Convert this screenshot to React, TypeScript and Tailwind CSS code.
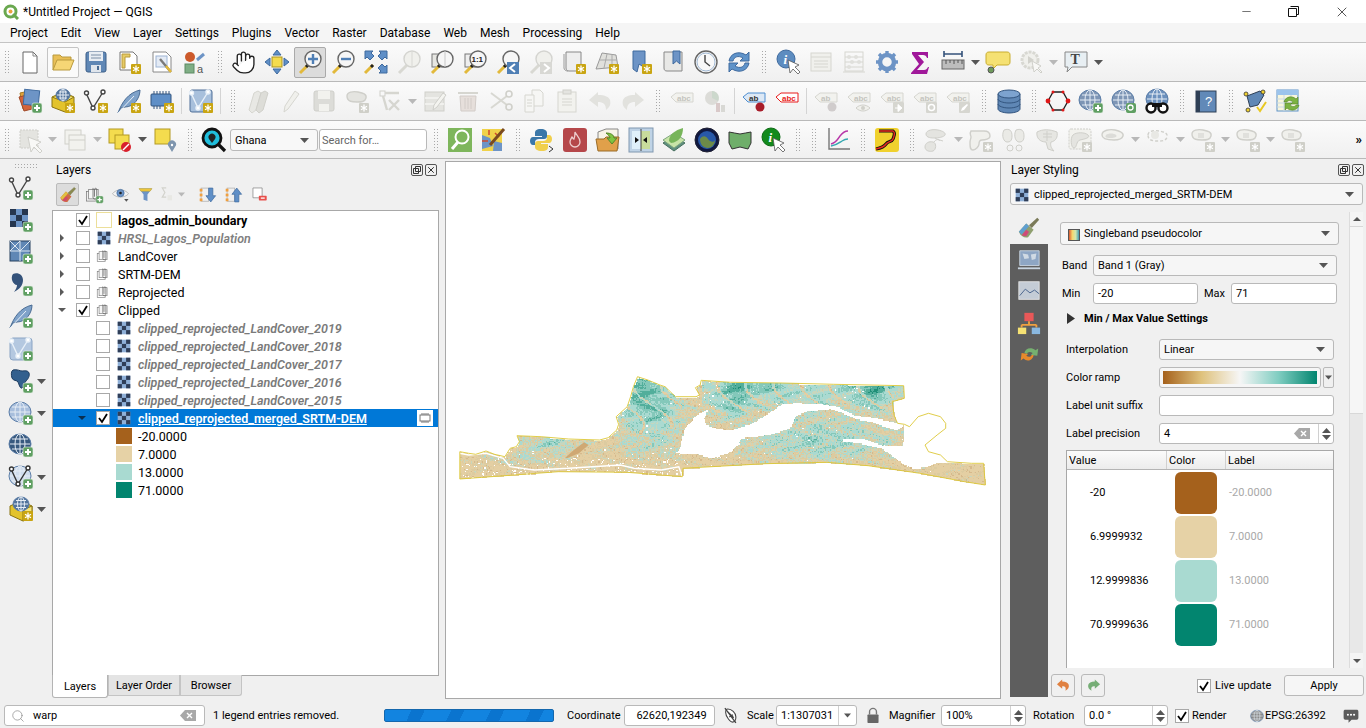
import type { ReactNode } from 'react'
import { Hand, Minus, X, Search } from 'lucide-react'

// shared icon bits, all in a 26x26 box
const Plus = () => (
  <g>
    <rect x="15" y="15" width="10" height="10" rx="2" fill="#5f9f62" stroke="#e8f0e8" strokeWidth=".6" />
    <path d="M20 17v6M17 20h6" stroke="#fff" strokeWidth="2" />
  </g>
)
const Star = ({ grey = false }: { grey?: boolean }) => (
  <g>
    <rect x="15" y="15" width="10" height="10" rx="1" fill={grey ? '#cfcfc8' : '#c9a512'} />
    <path d="M20 16.5v7M17 18.2l6 3.6M23 18.2l-6 3.6" stroke="#fff" strokeWidth="1.3" />
  </g>
)
const Mag = ({ grey = false, children }: { grey?: boolean; children?: ReactNode }) => (
  <g>
    <path d="M3 24l8-8" stroke={grey ? '#d8d8d2' : '#e2b93b'} strokeWidth="3" />
    {!grey && <path d="M9 18l2-2" stroke="#222" strokeWidth="3" />}
    <circle cx="16" cy="10" r="8" fill={grey ? '#f0f0ec' : '#f6f6f6'} stroke={grey ? '#d4d4d0' : '#666'} strokeWidth="1.4" />
    {children}
  </g>
)
const Globe = ({ c = '#6b90bd', cx = 12, cy = 12, r = 10 }: { c?: string; cx?: number; cy?: number; r?: number }) => (
  <g>
    <ellipse cx={cx} cy={cy} rx={r + 1} ry={r} fill={c} stroke="#5c7ea8" />
    <path
      d={`M${cx - r} ${cy}h${2 * r}M${cx - r + 2} ${cy - r / 2}h${2 * r - 4}M${cx - r + 2} ${cy + r / 2}h${2 * r - 4}M${cx} ${cy - r}v${2 * r}`}
      stroke="#e6edf5"
      strokeWidth="1"
    />
    <ellipse cx={cx} cy={cy} rx={r / 2} ry={r} fill="none" stroke="#e6edf5" />
  </g>
)
const Checker = ({ light = false }: { light?: boolean }) => (
  <g>
    <rect x="2" y="2" width="18" height="18" fill={light ? '#8fb0d8' : '#6d94c6'} />
    {[[2, 2], [14, 2], [8, 8], [2, 14], [14, 14]].map(([x, y]) => (
      <rect key={`${x}-${y}`} x={x} y={y} width="6" height="6" fill={light ? '#2f3e58' : '#26364f'} />
    ))}
  </g>
)
const Vee = ({ c = '#444' }: { c?: string }) => (
  <g fill="#fff" stroke={c} strokeWidth="1.4">
    <path d="M3 5l7 15L20 4" fill="none" />
    <circle cx="3.5" cy="5" r="2" />
    <circle cx="10" cy="20" r="2" />
    <circle cx="20" cy="4" r="2" />
  </g>
)
const Feather = () => (
  <g>
    <path d="M2 25C6 14 12 5 24 2c0 8-6 17-15 17l-4 1z" fill="#7fa2c9" stroke="#4a6c94" />
    <path d="M2 25L18 8" stroke="#e8f0f8" />
  </g>
)
const Ab = ({ fill = '#f2f2ee', line = '#d6d6d0', color = '#c4c4be', t = 'abc' }: { fill?: string; line?: string; color?: string; t?: string }) => (
  <g>
    <path d="M2 9l5-4h17v9H7z" fill={fill} stroke={line} />
    <text x="8" y="13" fontSize="8" fontWeight="700" fill={color} fontFamily="Liberation Sans">{t}</text>
  </g>
)
const GreyShape = () => <path d="M3 8c0-4 6-5 11-4s9 2 8 6-5 4-9 4-10 0-10-6z" fill="#e4e4e0" stroke="#cfcfca" strokeWidth="1.4" />

const ic: Record<string, ReactNode> = {
  new: <g><path d="M6 3h10l4 4v17H6z" fill="#fff" stroke="#666" /><path d="M16 3v4h4" fill="none" stroke="#888" /></g>,
  open: <g><path d="M3 21V6h7l2 2h9v4" fill="#e9bf56" stroke="#b99a3e" /><path d="M3 21l4-10h17l-4 10z" fill="#f6d675" stroke="#b99a3e" /></g>,
  save: <g><rect x="3" y="3" width="20" height="20" rx="2" fill="#5f87b5" stroke="#3d5f88" /><rect x="6" y="3" width="14" height="9" fill="#e8edf3" /><path d="M8 6h10M8 9h10" stroke="#7a8ea6" /><rect x="8" y="16" width="10" height="7" fill="#dfe5ec" /><rect x="14" y="17" width="2" height="4" fill="#4a6c94" /></g>,
  saveAs: <g><path d="M4 3h13l4 4v14H4z" fill="#fff" stroke="#777" /><path d="M6 5h8v3H9v11H6z" fill="#e6cb65" stroke="#b99a3e" /><Star /></g>,
  layout: <g><path d="M4 3h13l5 5v15H4z" fill="#fff" stroke="#888" /><rect x="7" y="7" width="11" height="11" fill="#e4ebf5" stroke="#9db4d4" /><path d="M11 10l10 12" stroke="#7a7a7a" strokeWidth="2.4" /><path d="M17 17l5 6" stroke="#e2b93b" strokeWidth="2.4" /></g>,
  style: <g><circle cx="8" cy="8" r="5" fill="#cc5a2c" /><path d="M15 11l7-6" stroke="#6d94c6" strokeWidth="3" /><rect x="3" y="15" width="9" height="9" fill="#7fae85" stroke="#5d8a63" /><text x="15" y="24" fontSize="11" fill="#555" fontFamily="Liberation Sans">a</text></g>,
  pan: <g><rect x="8" y="8" width="10" height="10" fill="#f4dc4e" stroke="#a99324" /><path d="M13 1l4 5h-8zM13 25l4-5H9zM1 13l5-4v8zM25 13l-5-4v8z" fill="#5f8fc7" stroke="#3f6a9e" /></g>,
  zoomIn: <Mag><path d="M11 10h10M16 5v10" stroke="#4f7fb5" strokeWidth="2.4" /></Mag>,
  zoomOut: <Mag><path d="M11 10h10" stroke="#4f7fb5" strokeWidth="2.4" /></Mag>,
  zoomFull: <g><path d="M2 2h8l-2 2 3 3-4 4-3-3-2 2zM24 2h-8l2 2-3 3 4 4 3-3 2 2zM24 24h-8l2-2-3-3 4-4 3 3 2-2z" fill="#5f8fc7" stroke="#3f6a9e" /><rect x="9" y="9" width="8" height="8" fill="#f4f4f0" /><path d="M2 24l8-8" stroke="#e2b93b" strokeWidth="3" /><path d="M8 18l2-2" stroke="#222" strokeWidth="3" /></g>,
  zoomSel: <Mag grey><path d="M16 2v16" stroke="#d8d8d4" /></Mag>,
  zoomLayer: <g><rect x="3" y="5" width="14" height="13" fill="#e6e6e2" stroke="#777" /><Mag><path d="M16 2v16" stroke="#c8c8c8" /></Mag></g>,
  zoom11: <g><rect x="3" y="5" width="14" height="13" fill="#eee" stroke="#777" /><Mag><text x="9.5" y="13" fontSize="8" fontWeight="700" fill="#222" fontFamily="Liberation Sans">1:1</text></Mag></g>,
  zoomLast: <g><Mag /><rect x="12" y="13" width="12" height="12" fill="#4f7fb5" /><path d="M20 15l-5 4 5 4" fill="none" stroke="#fff" strokeWidth="2" /></g>,
  zoomNext: <g><Mag grey /><rect x="12" y="13" width="12" height="12" fill="#d8d8d4" /><path d="M16 15l5 4-5 4" fill="none" stroke="#fff" strokeWidth="2" /></g>,
  mapNew: <g><path d="M5 3h15v19H8c-2 0-3-1-3-3z" fill="#eee" stroke="#888" /><path d="M3 5v14c0 2 2 3 4 3" fill="none" stroke="#999" /><Star /></g>,
  map3d: <g><path d="M8 4l14 2 2 12-22 2z" fill="#e0e0dc" stroke="#999" /><path d="M6 11l17 0M13 5l-3 14M18 5l0 14" stroke="#aaa" /><Star /></g>,
  bookNew: <g><path d="M6 2h12v17l-6-4-2 8-4-3z" fill="#6d94c6" stroke="#3f6a9e" /><Star /></g>,
  bookShow: <g><path d="M4 3h18v19H7c-2 0-3-1-3-3z" fill="#e8e8e6" stroke="#888" /><path d="M13 2h7v13l-3.500-3-3.500 3z" fill="#6d94c6" stroke="#3f6a9e" /></g>,
  clock: <g><circle cx="13" cy="13" r="11" fill="#f8f8f8" stroke="#666" strokeWidth="1.4" /><circle cx="13" cy="13" r="9" fill="none" stroke="#9fb8d4" /><path d="M12 6v7l5 4" fill="none" stroke="#444" strokeWidth="1.4" /></g>,
  refresh: <g><path d="M3 12C4 5 12 1 20 6l3-3v9h-9l3-3c-5-3-9-1-10 3z" fill="#5f93c9" stroke="#3f6a9e" /><path d="M23 14c-1 7-9 11-17 6l-3 3v-9h9l-3 3c5 3 9 1 10-3z" fill="#5f93c9" stroke="#3f6a9e" /></g>,
  identify: <g><circle cx="11" cy="10" r="9" fill="#5d8cc0" stroke="#3f6a9e" /><text x="8.500" y="15" fontSize="13" fontWeight="700" fontStyle="italic" fill="#fff" fontFamily="Liberation Serif">i</text><path d="M13 11l2 13 3-4 5 5 2-2-5-5 4-2z" fill="#fff" stroke="#555" strokeWidth=".8" /></g>,
  table: <g><rect x="3" y="4" width="20" height="18" fill="#f0f0ec" stroke="#d6d6d0" /><path d="M3 8h20M6 12h14M6 15h14M6 18h14" stroke="#d6d6d0" /></g>,
  abacus: <g><rect x="4" y="3" width="18" height="19" fill="none" stroke="#d6d6d0" /><path d="M2 23h22M4 8h18M4 13h18M4 18h18" stroke="#d6d6d0" /><g fill="#e0e0dc"><circle cx="8" cy="8" r="2" /><circle cx="15" cy="8" r="2" /><circle cx="11" cy="13" r="2" /><circle cx="18" cy="13" r="2" /><circle cx="8" cy="18" r="2" /></g></g>,
  gear: <g><circle cx="13" cy="13" r="7" fill="none" stroke="#6d94c6" strokeWidth="4.500" /><path d="M13 2v4M13 20v4M2 13h4M20 13h4M5 5l3 3M18 18l3 3M21 5l-3 3M8 18l-3 3" stroke="#6d94c6" strokeWidth="3.400" /></g>,
  sigma: <path d="M5 3h16v6h-1c-.5-2-2-3-4-3H11l6 7-7 8h7c2 0 3-1 4-3h1l-2 7H4v-1l8-9-7-10z" fill="#a0189a" />,
  ruler: <g><path d="M4 5h18M4 2v6M22 2v6" stroke="#34527a" strokeWidth="1.600" /><rect x="2" y="11" width="22" height="9" fill="#bdbdbd" stroke="#666" /><path d="M6 11v4M10 11v3M14 11v4M18 11v3M22 11v4" stroke="#555" /></g>,
  note: <g><path d="M4 3h18c2 0 3 1 3 3v7c0 2-1 3-3 3H12l-4 4v-4H4c-2 0-3-1-3-3V6c0-2 1-3 3-3z" fill="#f5e173" stroke="#c9ad2e" /><circle cx="6" cy="21" r="3" fill="#6e9a5b" stroke="#555" /></g>,
  actions: <g><circle cx="12" cy="11" r="8" fill="#f0f0ec" stroke="#d8d8d2" strokeWidth="3" strokeDasharray="3 1" /><path d="M10 7l6 4-6 4z" fill="#d2d2cc" /><path d="M14 12l2 11 3-3 4 4 1-1-4-4 3-2z" fill="#f8f8f6" stroke="#d0d0ca" /></g>,
  textBox: <g><path d="M2 3h22v15H9l-5 5 1-5H2z" fill="#e8eff3" stroke="#888" /><text x="7.500" y="15" fontSize="14" fontWeight="700" fill="#444" fontFamily="Liberation Serif">T</text></g>,

  layers: <g><path d="M3 5l9-2 3 16-9 2z" fill="#e0a33b" stroke="#a87a20" /><path d="M2 9l8-2 5 14-8 2z" fill="#d4643a" stroke="#a04a28" /><rect x="7" y="2" width="15" height="15" fill="#6d94c6" stroke="#3f6a9e" transform="rotate(6 14 9)" /><Plus /></g>,
  gpkg: <g><path d="M2 9l11-5 11 5v11l-9 4-13-5z" fill="#e3c32c" stroke="#8a7412" /><path d="M2 9l13 5 9-5" fill="#f6e67a" stroke="#8a7412" /><Globe c="#53749c" cx={13} cy={7} r={6} /><Star /></g>,
  vee: <g><Vee /><Star /></g>,
  feather: <g><Feather /><Star /></g>,
  chip: <g><rect x="2" y="6" width="20" height="12" rx="1" fill="#5f8fc7" stroke="#33557f" /><path d="M5 3v3M8 3v3M11 3v3M14 3v3M17 3v3M20 3v3M5 18v3M8 18v3M11 18v3" stroke="#33557f" /><Star /></g>,
  veeBox: <g><rect x="2" y="2" width="22" height="22" rx="2" fill="#a8c0dc" stroke="#4f6f98" /><Vee c="#e8f0f8" /><Star /></g>,

  dPencils: <g><path d="M4 22L9 5l4-2 3 2-5 17-4 3z" fill="#e8e8e4" stroke="#d6d6d0" /><path d="M11 22l5-17 4-2 3 2-5 17-4 3z" fill="#ddddd8" stroke="#d0d0ca" /></g>,
  dPencil: <path d="M6 24l1-6L17 3l4 3-11 15z" fill="#f0f0ec" stroke="#d6d6d0" />,
  dSave: <g><rect x="3" y="3" width="20" height="20" rx="2" fill="#dcdcd8" stroke="#cfcfca" /><rect x="7" y="3" width="12" height="8" fill="#f2f2ee" /><rect x="8" y="16" width="10" height="7" fill="#f2f2ee" /></g>,
  dShape: <g><GreyShape /><Star grey /></g>,
  dTools: <g><rect x="3" y="3" width="5" height="5" fill="none" stroke="#cfcfca" /><path d="M6 8l4 14M8 5h14M12 12l10 10M22 12L12 22" stroke="#d6d6d0" strokeWidth="2.400" /></g>,
  dEdit: <g><rect x="3" y="4" width="19" height="19" fill="#e4e4e0" stroke="#cfcfca" /><path d="M3 10h19M3 16h19" stroke="#f5f5f2" strokeWidth="1.500" /><path d="M11 22l1-5 9-12 3 2-9 12z" fill="#f4f4f0" stroke="#cfcfca" /></g>,
  dTrash: <g><path d="M3 5h20" stroke="#d6d6d0" strokeWidth="2" /><path d="M5 8h16l-1 15H6z" fill="#e6dfdb" stroke="#d2ccc8" /><path d="M10 10v11M13 10v11M16 10v11" stroke="#d2ccc8" /></g>,
  dCut: <g><path d="M3 5l16 12M3 20L19 8" stroke="#d8d8d2" strokeWidth="2" /><circle cx="21" cy="6" r="3" fill="none" stroke="#d0d0ca" strokeWidth="1.600" /><circle cx="21" cy="19" r="3" fill="none" stroke="#d0d0ca" strokeWidth="1.600" /></g>,
  dCopy: <g><path d="M11 2h8l3 3v13H11z" fill="#f6f6f4" stroke="#d6d6d0" /><path d="M4 7h9v17H4z" fill="#f6f6f4" stroke="#d6d6d0" /><path d="M6 12h5M6 15h5M6 18h5" stroke="#d6d6d0" /></g>,
  dPaste: <g><rect x="4" y="4" width="18" height="20" fill="#f2f2ee" stroke="#d6d6d0" /><rect x="9" y="2" width="8" height="4" fill="#e4e4e0" stroke="#d0d0ca" /><path d="M8 11h10M8 14h10M8 17h10" stroke="#d6d6d0" /></g>,
  dUndo: <path d="M11 4L2 12l9 7v-5c5 0 8 2 8 8 4-3 5-6 4-10-1-3-5-5-12-5z" fill="#e2e2de" />,
  dRedo: <path d="M15 4l9 8-9 7v-5c-5 0-8 2-8 8-4-3-5-6-4-10 1-3 5-5 12-5z" fill="#e2e2de" />,
  dAbc: <Ab />,
  dPie: <g><circle cx="10" cy="10" r="7" fill="#dcdcd8" /><path d="M10 10V3a7 7 0 0 1 6 10z" fill="#ccd8cc" /><rect x="14" y="15" width="4" height="9" fill="#d9c9c9" /><rect x="19" y="17" width="4" height="7" fill="#d8d8d4" /></g>,
  abPin: <g><Ab fill="#dce8f5" line="#4f8ed0" color="#333" t="ab" /><circle cx="19" cy="19" r="4.500" fill="#a81d2a" /></g>,
  abRed: <Ab fill="#fff" line="#e81c1c" color="#e81c1c" />,
  dAbPin: <g><Ab t="ab" /><circle cx="19" cy="19" r="4.500" fill="#d0cccc" /></g>,
  dAbEye: <g><Ab /><path d="M10 20c4-4 10-4 14 0-4 4-10 4-14 0z" fill="#f0f0ec" stroke="#d0d0ca" /><circle cx="17" cy="20" r="2" fill="#d0d0ca" /></g>,
  dAbMove: <g><Ab /><rect x="14" y="14" width="11" height="11" rx="1" fill="#d6d6d0" /><path d="M16 20h4M19 16.500l4 3.500-4 3.500z" fill="#fff" stroke="#fff" /></g>,
  dAbRot: <g><Ab /><rect x="14" y="14" width="11" height="11" rx="1" fill="#d6d6d0" /><circle cx="19.500" cy="19.500" r="3" fill="none" stroke="#fff" strokeWidth="1.500" /></g>,
  dAbEdit: <g><Ab /><rect x="14" y="14" width="11" height="11" rx="1" fill="#d6d6d0" /><path d="M16 23l1-3 5-4 1 1-4 5z" fill="#fff" /></g>,
  db: <g><path d="M2 6v15c0 2 5 4 11 4s11-2 11-4V6z" fill="#5f87b5" stroke="#33557f" /><ellipse cx="13" cy="6" rx="11" ry="4" fill="#7da3cf" stroke="#33557f" /><path d="M2 11c0 2 5 4 11 4s11-2 11-4M2 16c0 2 5 4 11 4s11-2 11-4" fill="none" stroke="#33557f" /></g>,
  hex: <g><path d="M3 13L8 4h10l5 9-5 9H8z" fill="none" stroke="#222" strokeWidth="1.300" /><g fill="#e01818"><circle cx="3" cy="13" r="2.400" /><circle cx="23" cy="13" r="2.400" /><circle cx="8" cy="4" r="1.500" /><circle cx="18" cy="4" r="1.500" /><circle cx="8" cy="22" r="1.500" /><circle cx="18" cy="22" r="1.500" /></g></g>,
  globePlus: <g><Globe c="#7d95b5" /><Plus /></g>,
  globeSearch: <g><Globe c="#7d95b5" /><rect x="15" y="15" width="10" height="10" rx="2" fill="#5f9f62" /><circle cx="19.500" cy="19.500" r="2.500" fill="none" stroke="#fff" strokeWidth="1.300" /></g>,
  globeBino: <g><Globe c="#6b90bd" cx={13} cy={11} r={10} /><circle cx="7" cy="20" r="4.500" fill="#fff" stroke="#111" strokeWidth="2.400" /><circle cx="19" cy="20" r="4.500" fill="#fff" stroke="#111" strokeWidth="2.400" /><path d="M8 15h10v4H8z" fill="#111" /></g>,
  help: <g><rect x="3" y="3" width="20" height="21" fill="#6189b8" stroke="#2e3f55" /><rect x="3" y="3" width="4" height="21" fill="#2e3f55" /><text x="12" y="18" fontSize="13" fill="#fff" fontFamily="Liberation Sans">?</text></g>,
  check: <g><path d="M5 8l13-5 4 4-6 10-8 2z" fill="#5f87b5" stroke="#2e3f55" /><g fill="#f0d12e" stroke="#333" strokeWidth=".8"><circle cx="4" cy="6" r="2" /><circle cx="21" cy="4" r="2" /><circle cx="6" cy="22" r="2" /></g><path d="M15 19l3 4 6-9" fill="none" stroke="#e8c822" strokeWidth="2" /></g>,
  tableSync: <g><rect x="2" y="2" width="21" height="21" fill="#f8f6dc" stroke="#5f93c9" /><rect x="2" y="2" width="21" height="5" fill="#9cc4ec" /><path d="M2 11h21M2 15h21M2 19h21M9 7v16M16 7v16" stroke="#c8d8e8" /><path d="M9 14c1-5 8-7 12-3l2-2v7h-7l2-2c-2-2-5-2-6 0zM24 17c-1 5-8 7-12 3l-2 2v-7h7l-2 2c2 2 5 2 6 0z" fill="#7cb342" stroke="#55852a" strokeWidth=".6" /></g>,

  dSelect: <g><rect x="3" y="3" width="18" height="18" fill="#e4e4e0" stroke="#cfcfca" strokeDasharray="2 1" /><path d="M11 10l3 15 3-5 6 6 2-2-6-6 5-3z" fill="#f8f8f6" stroke="#cfcfca" /></g>,
  dTable: <g><rect x="3" y="3" width="16" height="14" fill="#f2f2ee" stroke="#d0d0ca" /><rect x="7" y="8" width="16" height="15" fill="#f2f2ee" stroke="#d0d0ca" /><path d="M7 13h16" stroke="#d0d0ca" /></g>,
  deselect: <g><rect x="2" y="2" width="14" height="14" fill="#f4dc4e" stroke="#b39a22" /><rect x="8" y="8" width="14" height="14" fill="#f4dc4e" stroke="#b39a22" /><circle cx="19" cy="20" r="5" fill="#d8202c" /><path d="M16 23l6-6" stroke="#fff" strokeWidth="1.500" /></g>,
  selPin: <g><rect x="3" y="2" width="15" height="15" fill="#f4dc4e" stroke="#b39a22" /><path d="M20 25l-3-5a4 4 0 1 1 6 0z" fill="#7e95ae" /><circle cx="20" cy="18" r="1.200" fill="#fff" /></g>,
  locate: <g><circle cx="11" cy="11" r="9" fill="#20bedc" stroke="#111" strokeWidth="2.800" /><path d="M17 17l7 7" stroke="#111" strokeWidth="3.200" /><path d="M11 16l-3-4a3.500 3.500 0 1 1 6 0z" fill="#222" /></g>,
  greenSearch: <g><rect x="1" y="1" width="24" height="24" fill="#7eb65c" /><circle cx="15" cy="10" r="6.500" fill="none" stroke="#fff" strokeWidth="2" /><path d="M5 22l6-7" stroke="#fff" strokeWidth="3" /></g>,
  paint: <g><rect x="2" y="2" width="20" height="22" fill="#f0d24a" /><path d="M2 8l8 3 3 8-11 3zM14 14l8 2v8h-9z" fill="#6d94c6" /><path d="M2 14h6M9 3v5M15 6l4 4" stroke="#d04a2c" strokeWidth="1.500" /><path d="M10 18L24 2" stroke="#7a4a20" strokeWidth="3" /></g>,
  python: <g><path d="M12 2c-5 0-6 2-6 4v3h7v1H4c-2 0-3 2-3 4s1 4 3 4h2v-3c0-2 2-3 4-3h5c2 0 3-1 3-3V6c0-2-2-4-6-4z" fill="#3b77a8" /><path d="M13 24c5 0 6-2 6-4v-3h-7v-1h8c2 0 3-2 3-4s-1-4-3-4h-2v3c0 2-2 3-4 3H9c-2 0-3 1-3 3v3c0 2 2 4 7 4z" fill="#f0cf4c" /><path d="M20 19l4 3-4 3" fill="none" stroke="#333" /></g>,
  fire: <g><rect x="1" y="1" width="24" height="24" rx="3" fill="#b5474a" /><path d="M13 5c1 3 5 5 5 10a5 5 0 0 1-10 0c0-2 1-3 2-5 1 1 1 2 2 2 1-2 1-4 1-7z" fill="none" stroke="#eecfcf" strokeWidth="1.300" /></g>,
  folderGo: <g><path d="M3 5l8-3h12v20H3z" fill="#f8f4e6" stroke="#888" /><path d="M1 12h8l2-2h13l-2 14H3z" fill="#e0a04a" stroke="#9a6c28" /><path d="M11 6c5 0 8 2 8 5h3l-5 6-5-6h3c0-2-2-3-4-5z" fill="#7fc441" stroke="#55852a" /></g>,
  swipe: <g><rect x="1" y="1" width="24" height="24" fill="#bfd3e6" stroke="#8098b0" /><rect x="4" y="4" width="9" height="18" fill="#dff0fa" /><rect x="13" y="4" width="9" height="18" fill="#c8dc9c" /><path d="M13 2v22" stroke="#444" /><path d="M11 13l-4-3v6zM15 13l4-3v6z" fill="#111" /></g>,
  leaf: <g><path d="M2 16l11-7 11 7-11 8z" fill="#5f8f7f" stroke="#48705f" /><path d="M2 13l11-7 11 7-11 8z" fill="#c8e4a8" stroke="#7fa87f" /><path d="M8 14c0-6 6-11 14-13 0 8-4 14-12 15z" fill="#77b55a" /></g>,
  earth: <g><circle cx="13" cy="13" r="12" fill="#101840" stroke="#223" /><circle cx="13" cy="13" r="9" fill="#2858a8" /><path d="M6 12c3-4 6-3 8 0s6 4 7 1c0 4-3 8-7 8-5 0-8-4-8-9z" fill="#6c8a48" /></g>,
  bowtie: <path d="M2 5c4 1 7 1 11 2 4-1 7-1 11-2v11l-3 6-8-2-8 2-3-6z" fill="#6fae6a" stroke="#333" />,
  iGreen: <g><circle cx="11" cy="10" r="9" fill="#128a1c" stroke="#0c6a14" /><text x="8.500" y="15" fontSize="13" fontWeight="700" fontStyle="italic" fill="#fff" fontFamily="Liberation Serif">i</text><path d="M13 11l2 13 3-4 5 5 2-2-5-5 4-2z" fill="#fff" stroke="#555" strokeWidth=".8" /></g>,
  chart: <g><path d="M4 1v21h21" fill="none" stroke="#777" strokeWidth="1.400" /><path d="M6 17c5-1 6-4 9-8s5-5 8-5" fill="none" stroke="#b836a8" strokeWidth="1.400" /><path d="M6 19c6-1 8-3 11-5s4-2 6-2" fill="none" stroke="#35a8b0" strokeWidth="1.400" /></g>,
  road: <g><rect x="1" y="1" width="24" height="24" rx="3" fill="#f0d12e" /><path d="M5 4h14c3 2 1 5 0 8s-5 2-7 5-5 4-10 5" fill="none" stroke="#111" strokeWidth="3.200" /><path d="M5 4h14c3 2 1 5 0 8s-5 2-7 5-5 4-10 5" fill="none" stroke="#e82a20" strokeWidth="1.400" /></g>,
  dMerge: <g><path d="M3 7c0-4 7-5 12-4s8 3 7 5-7 3-10 3-9 0-9-4zM2 20c0-4 4-6 8-5s3 8 0 9-8 0-8-4z" fill="#e4e4e0" stroke="#cfcfca" /><path d="M12 11c3 2 5 2 8 3M11 15c2-3 5-3 6-1" fill="none" stroke="#cfcfca" /></g>,
  dMergeStar: <g><path d="M3 4h13c4 0 6 2 6 5s-5 4-8 4-3 2-3 4-3 6-6 6-3-3-3-7 1-4 1-6-2-3 0-6z" fill="#f0f0ec" stroke="#cfcfca" strokeWidth="1.400" /><Star grey /></g>,
  dCutShape: <g><path d="M3 3c6-2 8 1 8 6s-2 6-5 6-6-6-3-12zM15 3c6-2 8 1 8 6s-2 6-5 6-6-6-3-12z" fill="#eaeae6" stroke="#cfcfca" /><circle cx="9" cy="21" r="3" fill="none" stroke="#cfcfca" /><circle cx="18" cy="21" r="3" fill="none" stroke="#cfcfca" /></g>,
  dRotate: <g><path d="M3 5c6-3 12-3 20 0 1 5-1 9-6 10-1 3 0 6 3 9l-6-2-2-7C6 15 2 11 3 5z" fill="#e6e6e2" stroke="#cfcfca" /><path d="M13 4v10M9 7h9M9 10h9" stroke="#cfcfca" /></g>,
  dBox: <g><rect x="2" y="2" width="22" height="20" rx="2" fill="#f2f2ee" stroke="#cfcfca" strokeDasharray="2 1" /><path d="M6 8c3-3 12-3 15 0s-4 4-8 5-3 8-6 8-4-10-1-13z" fill="#e4e4e0" stroke="#cfcfca" /><Star grey /></g>,
  dShapeFlat: <g><path d="M2 8c0-5 8-6 13-5s9 3 8 6-5 4-9 4-12 0-12-5z" fill="#f2f2ee" stroke="#cfcfca" strokeWidth="1.400" /><path d="M6 8c2-2 8-2 10 0s-2 3-5 3-7 0-5-3z" fill="#dcdcd8" /></g>,
  dDash: <g><path d="M3 8c0-4 6-5 11-4s9 2 8 6-5 4-9 4-10 0-10-6z" fill="none" stroke="#cfcfca" strokeWidth="1.400" strokeDasharray="3 2" /><circle cx="10" cy="8" r="4" fill="#e8e8e4" /></g>,
  dStarShape: <g><path d="M2 7c0-4 6-5 11-4s9 2 8 6-5 4-9 4-10 0-10-6z" fill="#f0f0ec" stroke="#cfcfca" strokeWidth="1.400" /><path d="M8 6h6v5H8z" fill="#e0e0dc" /><Star grey /></g>,

  rasterAdd: <g><Checker /><Plus /></g>,
  meshAdd: <g><rect x="2" y="2" width="20" height="20" fill="#5f87b5" stroke="#27405f" /><path d="M12 2v20M2 12h20M2 2l10 10M12 2l-10 10M22 2L12 12" stroke="#dce6f0" /><Plus /></g>,
  commaAdd: <g><path d="M5 3c5-2 10 1 10 6 0 5-3 9-9 12 2-3 3-5 3-7-4 0-7-7-4-11z" fill="#34527a" /><Plus /></g>,
  featherAdd: <g><Feather /><Plus /></g>,
  veeAdd: <g><Vee /><Plus /></g>,
  veeBoxAdd: <g><rect x="2" y="2" width="22" height="22" rx="3" fill="#b4c8e0" stroke="#8aa4c4" /><Vee c="#e8f0f8" /><Plus /></g>,
  pgAdd: <g><path d="M5 2c4-1 7 1 9 1s6-1 7 2-1 6-3 8-2 6-4 7-3-4-4-6-5-1-6-4-1-7 1-8z" fill="#33608e" stroke="#1e3d60" /><Plus /></g>,
  wmsAdd: <g><Globe c="#a8bedc" /><Plus /></g>,
  wcsAdd: <g><Globe c="#38597e" /><Plus /></g>,
  wfsAdd: <g><Globe c="#d0dded" /><Vee c="#333" /><Plus /></g>,
  boxAdd: <g><path d="M2 10l11-5 11 5v10l-9 5-13-6z" fill="#e3c32c" stroke="#8a7412" /><path d="M15 14l9-4v10l-9 5z" fill="#f6e67a" stroke="#8a7412" /><Globe c="#53749c" cx={13} cy={8} r={7} /><Star /></g>,

  brush: <g><path d="M2 17l8-9 8 7-6 8c-4 1-8-1-10-6z" fill="#cf6a44" /><path d="M2 17l8-9 3 3-8 9z" fill="#e0c040" /><path d="M5 21l5-6 3 2-3 5z" fill="#d04a6a" /><path d="M13 10l9-8 2 2-8 9z" fill="#8a8a50" stroke="#6a6a3a" strokeWidth=".6" /></g>,
  funnel: <g><path d="M3 4h20l-7 9v10l-6-2v-8z" fill="#6d94c6" /><path d="M3 4h20l-3 4H6z" fill="#f0c83c" stroke="#b89a2a" strokeWidth=".6" /></g>,
  eye: <g><path d="M2 12c5-7 17-7 22 0-5 6-17 6-22 0z" fill="#f4f4f4" stroke="#aaa" /><circle cx="13" cy="11" r="5" fill="#6d94c6" stroke="#3f6a9e" /><circle cx="13" cy="11" r="1.800" fill="#222" /><path d="M18 19h6l-3 4z" fill="#555" /></g>,
  expand: <g><rect x="3" y="3" width="11" height="19" fill="none" stroke="#aaa" /><rect x="1" y="4" width="4" height="4" fill="#f0a040" /><rect x="1" y="11" width="4" height="4" fill="#f0a040" /><rect x="1" y="18" width="4" height="4" fill="#f0a040" /><path d="M14 3h6v11h4l-7 9-7-9h4z" fill="#5f8fc7" stroke="#3f6a9e" /></g>,
  collapse: <g><rect x="3" y="3" width="11" height="19" fill="none" stroke="#aaa" /><rect x="1" y="4" width="4" height="4" fill="#f0a040" /><rect x="1" y="11" width="4" height="4" fill="#f0a040" /><rect x="1" y="18" width="4" height="4" fill="#f0a040" /><path d="M14 23h6V12h4l-7-9-7 9h4z" fill="#5f8fc7" stroke="#3f6a9e" /></g>,
  removeLayer: <g><path d="M3 3h14v15H3z" fill="#fff" stroke="#777" /><rect x="12" y="15" width="12" height="7" rx="1" fill="#e8504c" /><path d="M15 18.500h6" stroke="#fff" strokeWidth="2" /></g>,
  epsilon: <g><path d="M11 3H5l4 7-4 7h6" fill="none" stroke="#d2d2cc" strokeWidth="1.800" /><path d="M13 14h7v8h-7z" fill="#e8e8e4" /></g>,
  group: <g><rect x="2" y="9" width="13" height="13" fill="none" stroke="#777" /><rect x="5" y="6" width="13" height="13" fill="#f6f6f6" stroke="#777" /><path d="M11 4v13c0 3 5 3 5 0V6c0-2-3-2-3 0v10" fill="none" stroke="#555" /></g>,
  groupAdd: <g><rect x="2" y="9" width="13" height="13" fill="none" stroke="#777" /><rect x="5" y="6" width="13" height="13" fill="#f6f6f6" stroke="#777" /><path d="M11 4v13c0 3 5 3 5 0V6c0-2-3-2-3 0v10" fill="none" stroke="#555" /><Plus /></g>,
  sbBrush: <g><path d="M2 17l8-9 8 7-6 8c-4 1-8-1-10-6z" fill="#8f9f6f" /><path d="M2 17l8-9 3 3-8 9z" fill="#5f9fd0" /><path d="M5 21l5-6 3 2-3 5z" fill="#d04a7a" /><path d="M13 10l9-8 2 2-8 9z" fill="#7a7a58" /></g>,
  sbMap: <g><path d="M3 3h21v16H3z" fill="#8ea6c4" stroke="#c8d4e0" /><path d="M6 6l6 1 1 4-5 1zM15 7l6-1-1 6-4 1z" fill="#d0dae4" /><path d="M1 22h24" stroke="#c8d4e0" strokeWidth="2" /></g>,
  sbChart: <g><rect x="2" y="3" width="22" height="19" fill="#c4ccd6" stroke="#e4e4e4" /><path d="M3 18l6-7 5 4 5-3 5 4" fill="none" stroke="#45618a" /></g>,
  sbTree: <g><rect x="8" y="2" width="10" height="9" fill="#e85858" /><path d="M13 11v4M5 15h16M5 15v3M21 15v3" stroke="#f0a040" strokeWidth="2" /><rect x="1" y="18" width="9" height="7" fill="#f5e173" /><rect x="16" y="18" width="9" height="7" fill="#8ab8e0" /></g>,
  sbHist: <g><path d="M8 12c1-5 7-7 12-3l3-2-1 8-7-1 2-2c-3-2-6-1-6 1z" fill="#76b070" /><path d="M18 14c-1 6-7 8-11 4l-3 2 1-8 7 1-2 2c3 2 5 1 6-1z" fill="#e88a2c" /></g>,
  undoO: <path d="M11 4L3 11l8 7v-4c5 0 6 2 5 7 4-2 6-5 5-9-1-3-4-5-10-5z" fill="#e08040" />,
  redoG: <path d="M15 4l8 7-8 7v-4c-5 0-6 2-5 7-4-2-6-5-5-9 1-3 4-5 10-5z" fill="#76ae76" />,
  lock: <g><path d="M8 11V7a5 5 0 0 1 10 0v4" fill="none" stroke="#777" strokeWidth="2" /><rect x="5" y="11" width="16" height="12" rx="1" fill="#666" /></g>,
  coordOff: <g><path d="M8 4c5 0 11 5 11 11s-3 7-5 7-9-7-9-13c0-3 1-5 3-5z" fill="#fff" stroke="#444" strokeWidth="1.500" /><path d="M4 3l15 20M8 8l8 8M10 15l5-3" stroke="#444" strokeWidth="1.800" /></g>,
  chat: <g><path d="M4 3h18c2 0 3 1 3 3v10c0 2-1 3-3 3h-8l-5 5v-5H4c-2 0-3-1-3-3V6c0-2 1-3 3-3z" fill="#5c5c5c" /><g fill="#fff"><circle cx="8" cy="11" r="1.700" /><circle cx="13" cy="11" r="1.700" /><circle cx="18" cy="11" r="1.700" /></g></g>,
}

const Icon = ({ n, s = 26 }: { n: string; s?: number }) => (
  <svg width={s} height={s} viewBox="0 0 26 26" className="shrink-0">
    {ic[n]}
  </svg>
)

const Tri = ({ c = '#555', w = 9 }: { c?: string; w?: number }) => (
  <svg width={w} height={5} viewBox="0 0 9 5" className="shrink-0">
    <path d="M0 0h9L4.500 5z" fill={c} />
  </svg>
)

const Spin = () => (
  <div className="flex flex-col items-center justify-center gap-[2px] w-[15px] h-full border-l border-[#d0d0d0] shrink-0">
    <svg width="9" height="5" viewBox="0 0 9 5"><path d="M0 5h9L4.500 0z" fill="#555" /></svg>
    <svg width="9" height="5" viewBox="0 0 9 5"><path d="M0 0h9L4.500 5z" fill="#555" /></svg>
  </div>
)

const Clear = () => (
  <svg width="16" height="11" viewBox="0 0 16 11" className="shrink-0">
    <path d="M0 5.500L5 0h11v11H5z" fill="#a8a8a8" />
    <path d="M7 3l5 5M12 3L7 8" stroke="#fff" strokeWidth="1.400" />
  </svg>
)

const Grip = ({ w = 16 }: { w?: number }) => (
  <div style={{ width: w }} className="h-full flex items-center justify-center shrink-0">
    <div className="w-[5px] h-[24px] bg-[radial-gradient(#a8a8a8_0.8px,transparent_0.9px)] bg-[length:3px_3px]" />
  </div>
)
const Sep = () => (
  <div className="w-[6px] h-full flex items-center justify-center shrink-0">
    <div className="w-px h-[26px] bg-[#d4d4d4]" />
  </div>
)
const T = ({ n, cls = '' }: { n: string; cls?: string }) => (
  <div className="w-[33px] h-full flex items-center justify-center shrink-0">
    <div className={`w-[32px] h-[31px] flex items-center justify-center rounded-[2px] ${cls}`}>
      <Icon n={n} />
    </div>
  </div>
)
const Dr = ({ off = false }: { off?: boolean }) => (
  <div className="w-[12px] h-full flex items-center justify-center shrink-0">
    <Tri c={off ? '#b8b8b8' : '#555'} />
  </div>
)
const Ts = ({ list }: { list: string }) => (
  <>
    {list.split(' ').map((n, i) => (
      <T key={i} n={n} />
    ))}
  </>
)

const Bar = ({ children, cls = 'h-[39px]' }: { children: ReactNode; cls?: string }) => (
  <div className={`${cls} flex items-stretch border-b border-[#b9b9b9] bg-gradient-to-b from-[#fbfbfb] to-[#f0f0f0] shrink-0`}>
    {children}
  </div>
)

// Segoe sits lower in its box than Roboto does, hence the pt on text holders
const Combo = ({ children, cls = '' }: { children: ReactNode; cls?: string }) => (
  <div className={`flex items-center justify-between border border-[#b9b9b9] rounded-[3px] pl-[4px] pr-[8px] shrink-0 ${cls}`}>
    <div className="flex items-center gap-[4px] min-w-0 whitespace-nowrap pt-[2px]">{children}</div>
    <Tri />
  </div>
)
const Field = ({ children, cls = '' }: { children?: ReactNode; cls?: string }) => (
  <div className={`flex items-center border border-[#b9b9b9] rounded-[3px] bg-white pl-[4px] shrink-0 whitespace-nowrap [&>span]:pt-[2px] ${cls}`}>
    {children}
  </div>
)

const Box = ({ on = false }: { on?: boolean }) => (
  <div className="w-[14px] h-[14px] border border-[#a8a8a8] bg-white flex items-center justify-center shrink-0">
    {on && (
      <svg width="12" height="12" viewBox="0 0 12 12">
        <path d="M2 6l3 4 5-8" fill="none" stroke="#000" strokeWidth="1.800" />
      </svg>
    )}
  </div>
)

const Arrow = ({ open = false, c = '#5a5a5a' }: { open?: boolean; c?: string }) => (
  <svg width="10" height="10" viewBox="0 0 10 10" className="shrink-0">
    {open ? <path d="M1 3h8L5 7z" fill={c} /> : <path d="M3 1l4 4-4 4z" fill={c} />}
  </svg>
)

const PanelBtns = () => (
  <div className="flex items-center gap-[2px]">
    <div className="w-[12px] h-[12px] border border-[#555] rounded-[2px] flex items-center justify-center">
      <svg width="8" height="8" viewBox="0 0 8 8"><path d="M2.500.5h5v5h-5zM.5 2.500h5v5h-5z" fill="none" stroke="#333" /></svg>
    </div>
    <div className="w-[12px] h-[12px] border border-[#555] rounded-[2px] flex items-center justify-center">
      <X size={10} strokeWidth={2.4} className="text-[#333]" />
    </div>
  </div>
)

// map raster, built once from a rough outline traced off the picture
type P = [number, number]
const toPx = (l: P[]): P[] => l.map(([x, y]) => [x / 2.904, y / 3])
const outline = toPx([[14,260],[40,265],[60,268],[90,258],[115,268],[145,275],[160,250],[178,245],[187,230],[180,212],[250,215],[330,222],[420,225],[445,218],[470,195],[475,178],[468,155],[500,125],[510,95],[518,65],[530,35],[560,45],[595,60],[610,65],[640,95],[700,95],[710,90],[698,68],[712,60],[715,46],[800,52],[950,54],[1100,58],[1303,62],[1305,100],[1270,110],[1275,150],[1285,175],[1305,178],[1320,185],[1345,155],[1375,145],[1410,155],[1425,175],[1425,190],[1400,210],[1365,240],[1375,260],[1410,270],[1430,290],[1500,295],[1535,295],[1540,360],[1480,350],[1350,325],[1200,302],[1080,292],[900,296],[662,310],[660,335],[500,322],[300,320],[14,342]])
const lagoon = toPx([[735,130],[700,150],[665,190],[652,250],[640,262],[660,265],[700,265],[740,278],[790,265],[820,240],[830,218],[870,215],[920,205],[970,190],[990,150],[1020,138],[1090,130],[1130,145],[1160,160],[1210,170],[1235,180],[1280,195],[1305,178],[1280,172],[1220,158],[1160,150],[1110,125],[1060,115],[990,112],[950,115],[900,150],[860,175],[800,195],[760,190],[730,180],[722,160]])
const east = toPx([[1305,178],[1320,185],[1345,155],[1375,145],[1410,155],[1425,175],[1425,190],[1400,210],[1365,240],[1375,260],[1410,270],[1430,290],[1400,290],[1370,305],[1330,310],[1300,295],[1280,280],[1240,250],[1180,235],[1125,228],[1125,220],[1180,218],[1240,240],[1300,240],[1305,205]])
const channel = toPx([[14,265],[40,270],[90,265],[140,280],[160,305],[230,315],[330,310],[400,305],[480,300],[520,310],[600,315],[650,305],[660,335]])

const inside = (poly: P[], x: number, y: number) => {
  let c = false
  for (let i = 0, j = poly.length - 1; i < poly.length; j = i++) {
    const [xi, yi] = poly[i]
    const [xj, yj] = poly[j]
    if (yi > y !== yj > y && x < ((xj - xi) * (y - yi)) / (yj - yi) + xi) c = !c
  }
  return c
}
const g = (x: number, y: number, cx: number, cy: number, sx: number, sy: number) =>
  Math.exp(-(((x - cx) / sx) ** 2) - ((y - cy) / sy) ** 2)

const rampColors = ['#e4cfa3', '#dccba0', '#c8d6bd', '#aadad1', '#84c8ba', '#52ae9b', '#1f8f77', '#d6b98c']

const buildRaster = () => {
  const paths: string[] = rampColors.map(() => '')
  let seed = 7
  const rnd = () => {
    seed = (seed * 16807) % 2147483647
    return seed / 2147483647
  }
  const st = 1.2
  for (let y = 10; y < 122; y += st) {
    for (let x = 3; x < 532; x += st) {
      if (!inside(outline, x, y) || inside(lagoon, x, y) || inside(east, x, y)) continue
      const zx = x * 2.904
      const zy = y * 3
      if (rnd() < (zy > 275 && zx < 660 ? 0.05 : 0.005)) continue
      const ridge = Math.abs(Math.sin(zx / 26 + 2.2 * Math.sin(zy / 38)))
      const hill = 0.56 * g(zx, zy, 565, 120, 105, 100) + 0.3 * g(zx, zy, 535, 50, 50, 40)
      const north = zx > 715 && zx < 1305 ? 0.34 * g(zx, zy, 1010, 90, 320, 60) + 0.36 * Math.exp(-(((zy - 60) / 22) ** 2)) * (0.55 + 0.45 * Math.sin(zx / 60)) + 0.36 * g(zx, zy, 1215, 95, 40, 40) + 0.34 * g(zx, zy, 800, 110, 55, 50) : 0
      let t = 0.1 + hill + north
      t += 0.4 * g(zx, zy, 1060, 225, 280, 70) + 0.4 * g(zx, zy, 270, 232, 100, 26) + 0.22 * g(zx, zy, 200, 280, 130, 24) + 0.16 * g(zx, zy, 560, 250, 120, 40)
      if (hill + north > 0.25 && ridge < 0.18) t -= 0.28
      t += 0.09 * Math.sin(zx / 17 + 3 * Math.sin(zy / 13))
      t += (rnd() - 0.5) * (hill + north > 0.3 ? 0.16 : 0.3)
      let b = t < 0.18 ? 0 : t < 0.3 ? 1 : t < 0.4 ? 2 : t < 0.56 ? 3 : t < 0.7 ? 4 : t < 0.86 ? 5 : 6
      if (b < 2 && rnd() < 0.07) b = 7
      paths[b] += `M${x.toFixed(1)} ${y.toFixed(1)}h${st}v${st}h-${st}z`
    }
  }
  return paths
}
const raster = buildRaster()
const pts = (l: P[]) => l.map(([x, y]) => `${x.toFixed(1)},${y.toFixed(1)}`).join(' ')

const MapShape = () => (
  <svg width="540" height="130" viewBox="0 0 540 130" className="ml-[4px]">
    {raster.map((d, i) => (
      <path key={i} d={d} fill={rampColors[i]} shapeRendering="crispEdges" />
    ))}
    <polygon points={pts(toPx([[320,278],[345,255],[375,232],[388,240],[360,265],[325,280]]))} fill="#cfa873" />
    <polyline points={pts(channel)} fill="none" stroke="#fff" strokeWidth="1.400" />
    <polygon points={pts(outline)} fill="none" stroke="#dcc736" strokeWidth="0.9" />
  </svg>
)

const Layer = ({
  pad,
  arrow,
  open,
  on,
  icon,
  label,
  cls = '',
}: {
  pad: number
  arrow?: boolean
  open?: boolean
  on?: boolean
  icon: ReactNode
  label: string
  cls?: string
}) => (
  <div className="h-[18px] flex items-center">
    <div style={{ width: pad }} className="shrink-0 flex justify-end pr-[9px]">
      {arrow && <Arrow open={open} />}
    </div>
    <Box on={on} />
    <div className="shrink-0 flex items-center justify-center w-[28px]">{icon}</div>
    <span className={`whitespace-nowrap ${cls}`}>{label}</span>
  </div>
)

const legend = [
  ['#a5611c', '-20.0000'],
  ['#e6d2a6', '7.0000'],
  ['#a9dad1', '13.0000'],
  ['#02856f', '71.0000'],
]
const table = [
  ['-20', '#a5611c', '-20.0000'],
  ['6.9999932', '#e6d2a6', '7.0000'],
  ['12.9999836', '#a9dad1', '13.0000'],
  ['70.9999636', '#02856f', '71.0000'],
]

const small = <svg width="14" height="14" viewBox="1 1 20 20" className="shrink-0"><Checker light /></svg>
const grp = <Icon n="group" s={16} />

export default function App() {
  return (
    <div className="w-[1366px] h-[728px] overflow-hidden flex flex-col bg-[#f0f0f0] text-[11px] text-black font-['Roboto',sans-serif]">
      {/* title bar */}
      <div className="h-[23px] bg-white flex items-center shrink-0">
        <svg width="16" height="16" viewBox="0 0 16 16" className="ml-[3px]">
          <circle cx="7.500" cy="7.500" r="5.500" fill="none" stroke="#6aa84f" strokeWidth="3" />
          <path d="M10 10l5 5" stroke="#6aa84f" strokeWidth="3" />
          <circle cx="7.500" cy="7.500" r="2" fill="#e8a33d" />
        </svg>
        <span className="ml-[4px] text-[12px]">*Untitled Project — QGIS</span>
        <div className="ml-auto flex items-center">
          <Minus size={13} strokeWidth={1} className="mr-[35px]" />
          <svg width="11" height="11" viewBox="0 0 11 11" className="mr-[35px]"><path d="M2.500.5h8v8h-2M.5 2.500h8v8h-8z" fill="none" stroke="#111" /></svg>
          <X size={16} strokeWidth={1} className="mr-[16px]" />
        </div>
      </div>

      {/* menu bar */}
      <div className="h-[20px] bg-[#f5f5f5] border-b border-[#c4c4c4] flex items-center gap-[13px] pl-[10px] shrink-0 text-[12px]">
        {['Project', 'Edit', 'View', 'Layer', 'Settings', 'Plugins', 'Vector', 'Raster', 'Database', 'Web', 'Mesh', 'Processing', 'Help'].map((m) => (
          <span key={m}>{m}</span>
        ))}
      </div>

      {/* toolbars */}
      <Bar>
        <Grip w={13} />
        <T n="new" />
        <T n="open" cls="bg-[#fafafa] border border-[#c4c4c4]" />
        <Ts list="save saveAs layout style" />
        <Grip />
        <div className="w-[33px] h-full flex items-center justify-center shrink-0"><Hand size={25} strokeWidth={1.3} fill="#fff" className="text-[#222]" /></div>
        <T n="pan" />
        <T n="zoomIn" cls="bg-[#dcdcdc] border border-[#aaa]" />
        <Ts list="zoomOut zoomFull zoomSel zoomLayer zoom11 zoomLast zoomNext mapNew map3d bookNew bookShow clock refresh" />
        <Grip />
        <Ts list="identify table abacus gear sigma ruler" />
        <Dr />
        <T n="note" />
        <T n="actions" />
        <Dr off />
        <T n="textBox" />
        <Dr />
      </Bar>
      <Bar>
        <Grip w={13} />
        <Ts list="layers gpkg vee feather chip" />
        <Sep />
        <T n="veeBox" />
        <Sep />
        <Grip w={18} />
        <Ts list="dPencils dPencil dSave dShape dTools" />
        <Dr off />
        <Ts list="dEdit dTrash dCut dCopy dPaste dUndo dRedo" />
        <Grip />
        <Ts list="dAbc dPie" />
        <Sep />
        <Ts list="abPin abRed" />
        <Sep />
        <Ts list="dAbPin dAbEye dAbMove dAbRot dAbEdit" />
        <Grip w={18} />
        <T n="db" />
        <Grip w={16.5} />
        <Ts list="hex globePlus globeSearch globeBino" />
        <Grip />
        <T n="help" />
        <Grip />
        <Ts list="check tableSync" />
      </Bar>
      <Bar cls="h-[38px]">
        <Grip w={13} />
        <T n="dSelect" />
        <Dr off />
        <T n="dTable" />
        <Dr off />
        <T n="deselect" />
        <Dr />
        <T n="selPin" />
        <Grip />
        <T n="locate" />
        <div className="h-full flex items-center shrink-0 pt-px">
          <Combo cls="w-[88px] h-[22px] bg-[#f8f8f8]">Ghana</Combo>
          <Field cls="w-[108px] h-[22px] ml-[1px] !pl-[2px] text-[#666]"><span>Search for…</span></Field>
        </div>
        <Grip />
        <Ts list="greenSearch paint" />
        <Grip />
        <Ts list="python fire folderGo swipe leaf earth bowtie iGreen" />
        <Grip />
        <Grip />
        <T n="chart" />
        <Grip />
        <T n="road" />
        <Grip w={16.5} />
        <T n="dMerge" />
        <Dr off />
        <Ts list="dMergeStar dCutShape dRotate dBox dShapeFlat" />
        <Dr off />
        <T n="dDash" />
        <Dr off />
        <T n="dStarShape" />
        <Dr off />
        <T n="dStarShape" />
        <Dr off />
        <T n="dStarShape" />
        <div className="ml-auto pr-[4px] self-center text-[13px] font-bold leading-none">»</div>
      </Bar>

      {/* main area */}
      <div className="flex-1 flex min-h-0">
        {/* data source toolbar */}
        <div className="w-[52px] shrink-0 flex flex-col">
          <div className="h-[13px] flex items-center justify-center">
            <div className="w-[24px] h-[5px] bg-[radial-gradient(#a8a8a8_0.8px,transparent_0.9px)] bg-[length:3px_3px]" />
          </div>
          {[
            ['veeAdd', 0],
            ['rasterAdd', 0],
            ['meshAdd', 0],
            ['commaAdd', 0],
            ['featherAdd', 0],
            ['veeBoxAdd', 0],
            ['pgAdd', 1],
            ['wmsAdd', 1],
            ['wcsAdd', 0],
            ['wfsAdd', 1],
            ['boxAdd', 1],
          ].map(([n, d]) => (
            <div key={n as string} className="h-[32.100px] flex items-center pl-[8px]">
              <Icon n={n as string} />
              {d === 1 && <div className="ml-[3px] mt-[2px]"><Tri /></div>}
            </div>
          ))}
        </div>

        {/* layers panel */}
        <div className="w-[387px] shrink-0 flex flex-col">
          <div className="h-[22px] flex items-center justify-between pl-[4px] pr-[2px] shrink-0">
            <span className="text-[12px]">Layers</span>
            <PanelBtns />
          </div>
          <div className="h-[27px] mb-[2px] flex items-center shrink-0">
            <div className="ml-[4px] w-[23px] h-[23px] bg-[#dcdcdc] border border-[#bbb] rounded-[2px] flex items-center justify-center"><Icon n="brush" s={18} /></div>
            <div className="ml-[3px] w-[25px] flex justify-center"><Icon n="groupAdd" s={19} /></div>
            <div className="w-[27px] flex justify-center"><Icon n="eye" s={19} /></div>
            <div className="w-[22px] flex justify-center"><Icon n="funnel" s={17} /></div>
            <div className="w-[22px] flex justify-center"><Icon n="epsilon" s={17} /></div>
            <Tri c="#b8b8b8" w={7} />
            <div className="ml-[10px] w-[26px] flex justify-center"><Icon n="expand" s={18} /></div>
            <div className="w-[26px] flex justify-center"><Icon n="collapse" s={18} /></div>
            <div className="w-[24px] flex justify-center"><Icon n="removeLayer" s={17} /></div>
          </div>
          <div className="flex-1 min-h-0 bg-white border border-[#a8a8a8] text-[12.500px] [&_span]:pt-[2px]">
            <Layer pad={23} on icon={<div className="w-[16px] h-[16px] border border-[#ecdf9a] bg-white" />} label="lagos_admin_boundary" cls="font-bold" />
            <Layer pad={23} arrow icon={small} label="HRSL_Lagos_Population" cls="italic font-semibold text-[#808080]" />
            <Layer pad={23} arrow icon={grp} label="LandCover" />
            <Layer pad={23} arrow icon={grp} label="SRTM-DEM" />
            <Layer pad={23} arrow icon={grp} label="Reprojected" />
            <Layer pad={23} arrow open on icon={grp} label="Clipped" />
            {['2019', '2018', '2017', '2016', '2015'].map((y) => (
              <Layer key={y} pad={43} icon={small} label={`clipped_reprojected_LandCover_${y}`} cls="italic font-semibold text-[#7a7a7a]" />
            ))}
            <div className="h-[18px] bg-[#0078d7] text-white flex items-center">
              <div className="w-[43px] flex justify-end pr-[9px] shrink-0"><Arrow open c="#0a2f50" /></div>
              <Box on />
              <div className="w-[28px] flex justify-center shrink-0">{small}</div>
              <span className="underline font-semibold whitespace-nowrap">clipped_reprojected_merged_SRTM-DEM</span>
              <div className="ml-auto mr-[5px] w-[16px] h-[16px] bg-white flex items-center justify-center">
                <svg width="12" height="10" viewBox="0 0 12 10"><rect x="1" y="2" width="10" height="6" fill="none" stroke="#777" /><path d="M3 0v2M5 0v2M7 0v2M9 0v2M3 8v2M5 8v2M7 8v2M9 8v2" stroke="#777" /></svg>
              </div>
            </div>
            {legend.map(([c, l]) => (
              <div key={l} className="h-[18px] flex items-center pl-[63px]">
                <div className="w-[16px] h-[16px] shrink-0" style={{ background: c }} />
                <span className="ml-[6px]">{l}</span>
              </div>
            ))}
          </div>
          <div className="h-[27px] flex items-start shrink-0">
            <div className="w-[56px] h-[23px] -mt-px pt-[2px] bg-white border border-t-0 border-[#b4b4b4] rounded-b-[3px] flex items-center justify-center">Layers</div>
            <div className="w-[72px] h-[21px] -mt-px pt-[2px] bg-[#e4e4e4] border border-t-0 border-[#c4c4c4] flex items-center justify-center">Layer Order</div>
            <div className="w-[62px] h-[21px] -mt-px pt-[2px] bg-[#e4e4e4] border border-t-0 border-[#c4c4c4] rounded-br-[3px] flex items-center justify-center">Browser</div>
          </div>
        </div>

        {/* splitter + canvas */}
        <div className="w-[6px] shrink-0" />
        <div className="w-[556px] shrink-0 mt-[2px] mb-[4px] bg-white border border-[#a8a8a8] flex items-center justify-center">
          <MapShape />
        </div>
        <div className="w-[4px] shrink-0" />

        {/* layer styling panel */}
        <div className="w-[361px] shrink-0 flex flex-col pl-[5px]">
          <div className="h-[22px] mb-[2px] flex items-center justify-between pl-[1px] pr-[2px] shrink-0">
            <span className="text-[12px]">Layer Styling</span>
            <PanelBtns />
          </div>
          <Combo cls="w-[353px] h-[22px] bg-[#f6f6f6]">
            {small}
            <span className="ml-[1px]">clipped_reprojected_merged_SRTM-DEM</span>
          </Combo>
          <div className="flex-1 min-h-0 flex mt-[7px] mb-[6px]">
            <div className="w-[38px] shrink-0 flex flex-col items-center">
              <div className="h-[32px] flex items-center justify-center w-full"><Icon n="sbBrush" s={24} /></div>
              <div className="flex-1 w-full bg-[#5e5e5e] flex flex-col items-center">
                {['sbMap', 'sbChart', 'sbTree', 'sbHist'].map((n) => (
                  <div key={n} className="h-[31.500px] w-full flex items-center justify-center"><Icon n={n} s={24} /></div>
                ))}
              </div>
            </div>
            <div className="flex-1 min-w-0 flex flex-col">
              <div className="h-[456px] flex shrink-0">
                <div className="w-[301px] shrink-0 flex flex-col overflow-hidden [&>div>span]:pt-[2px]">
                  <Combo cls="ml-[12px] mt-[10px] w-[279px] h-[23px] bg-[#f6f6f6]">
                    <svg width="12" height="12" viewBox="0 0 12 12" className="ml-[3px]">
                      <defs>
                        <linearGradient id="ps"><stop stopColor="#d7492c" /><stop offset=".35" stopColor="#f5d76e" /><stop offset=".65" stopColor="#cfe8b0" /><stop offset="1" stopColor="#2f8fb0" /></linearGradient>
                      </defs>
                      <rect x=".5" y=".5" width="11" height="11" fill="url(#ps)" stroke="#555" />
                    </svg>
                    <span>Singleband pseudocolor</span>
                  </Combo>
                  <div className="mt-[10px] ml-[14px] flex items-center">
                    <span className="w-[31px]">Band</span>
                    <Combo cls="w-[244px] h-[21px] bg-[#f6f6f6]">Band 1 (Gray)</Combo>
                  </div>
                  <div className="mt-[7px] ml-[14px] flex items-center">
                    <span className="w-[31px]">Min</span>
                    <Field cls="w-[105px] h-[21px]"><span>-20</span></Field>
                    <span className="ml-[6px] w-[27px]">Max</span>
                    <Field cls="w-[106px] h-[21px]"><span>71</span></Field>
                  </div>
                  <div className="mt-[5px] h-[18px] ml-[19px] flex items-center font-bold">
                    <svg width="8" height="11" viewBox="0 0 8 11"><path d="M0 0l8 5.500L0 11z" fill="#333" /></svg>
                    <span className="ml-[9px]">Min / Max Value Settings</span>
                  </div>
                  <div className="mt-[12px] ml-[18px] flex items-center">
                    <span className="w-[93px]">Interpolation</span>
                    <Combo cls="w-[175px] h-[21px] bg-[#f6f6f6]">Linear</Combo>
                  </div>
                  <div className="mt-[7px] ml-[18px] flex items-center">
                    <span className="w-[93px]">Color ramp</span>
                    <div className="w-[162px] h-[21px] border border-[#b9b9b9] rounded-[3px] bg-[#f6f6f6] p-[3px] shrink-0">
                      <div className="w-full h-full bg-[linear-gradient(90deg,#a5611c,#dfc27d_25%,#f6f6f6_50%,#80cdc1_75%,#02856f)]" />
                    </div>
                    <div className="ml-[2px] w-[11px] h-[21px] border border-[#b9b9b9] rounded-[2px] flex items-center justify-center shrink-0"><Tri w={7} /></div>
                  </div>
                  <div className="mt-[7px] ml-[18px] flex items-center">
                    <span className="w-[93px]">Label unit suffix</span>
                    <Field cls="w-[175px] h-[21px]" />
                  </div>
                  <div className="mt-[7px] ml-[18px] flex items-center">
                    <span className="w-[93px]">Label precision</span>
                    <Field cls="w-[175px] h-[21px] justify-between">
                      <span>4</span>
                      <div className="flex items-center h-full gap-[8px]">
                        <Clear />
                        <Spin />
                      </div>
                    </Field>
                  </div>
                  <div className="mt-[6px] ml-[18px] w-[268px] flex-1 border-x border-t border-[#a8a8a8] bg-white min-h-0">
                    <div className="h-[19px] flex border-b border-[#b4b4b4] bg-gradient-to-b from-[#fbfbfb] to-[#ececec] [&>div]:pt-[2px]">
                      <div className="w-[100px] pl-[2px] border-r border-[#d0d0d0] flex items-center">Value</div>
                      <div className="w-[59px] pl-[2px] border-r border-[#d0d0d0] flex items-center">Color</div>
                      <div className="pl-[2px] flex items-center">Label</div>
                    </div>
                    <div className="pt-px">
                      {table.map(([v, c, l]) => (
                        <div key={v} className="h-[44px] flex items-center">
                          <div className="w-[100px] pl-[23px]">{v}</div>
                          <div className="w-[59px] pl-[8px]">
                            <div className="w-[42px] h-[42px] rounded-[6px]" style={{ background: c }} />
                          </div>
                          <div className="pl-[3px] text-[#a8a8a8]">{l}</div>
                        </div>
                      ))}
                    </div>
                  </div>
                </div>
                <div className="w-[14px] shrink-0 flex flex-col bg-[#e8e8e8] border-l border-[#dcdcdc]">
                  <div className="h-[14px] flex items-center justify-center bg-[#f4f4f4]"><svg width="8" height="4" viewBox="0 0 8 4"><path d="M0 4h8L4 0z" fill="#555" /></svg></div>
                  <div className="h-[188px] bg-[#f6f6f6] border-y border-[#d8d8d8]" />
                  <div className="flex-1" />
                  <div className="h-[15px] flex items-center justify-center bg-[#f4f4f4]"><svg width="8" height="4" viewBox="0 0 8 4"><path d="M0 0h8L4 4z" fill="#555" /></svg></div>
                </div>
              </div>
              <div className="flex-1 flex items-center pl-[3px] pt-[6px]">
                <div className="w-[24px] h-[23px] border border-[#b9b9b9] rounded-[3px] flex items-center justify-center shrink-0"><Icon n="undoO" s={17} /></div>
                <div className="ml-[6px] w-[24px] h-[23px] border border-[#b9b9b9] rounded-[3px] flex items-center justify-center shrink-0"><Icon n="redoG" s={17} /></div>
                <div className="ml-[92px]"><Box on /></div>
                <span className="ml-[4px] pt-[2px] w-[69px] whitespace-nowrap shrink-0">Live update</span>
                <div className="w-[80px] h-[21px] pt-[2px] border border-[#b9b9b9] rounded-[3px] bg-[#f6f6f6] flex items-center justify-center shrink-0">Apply</div>
              </div>
            </div>
          </div>
        </div>
      </div>

      {/* status bar */}
      <div className="h-[25px] shrink-0 flex items-center pl-[4px] whitespace-nowrap [&>*]:shrink-0 [&>span]:pt-[2px]">
        <Field cls="w-[201px] h-[21px] justify-between pr-[8px]">
          <div className="flex items-center gap-[8px] pl-[2px]">
            <Search size={14} strokeWidth={1.2} className="text-[#888]" />
            <span className="pt-[2px]">warp</span>
          </div>
          <Clear />
        </Field>
        <span className="ml-[8px] w-[171px]">1 legend entries removed.</span>
        <div className="w-[170px] h-[13px] rounded-[2px] border border-[#1467ad] bg-[repeating-linear-gradient(115deg,#1284e0_0_24px,#0a74cf_24px_36px)]" />
        <span className="ml-[13px] w-[57px]">Coordinate</span>
        <Field cls="w-[91px] h-[21px] justify-center"><span>62620,192349</span></Field>
        <div className="w-[32px] flex justify-center"><Icon n="coordOff" s={19} /></div>
        <span className="w-[29px]">Scale</span>
        <div className="w-[81px] h-[21px] border border-[#b9b9b9] rounded-[3px] bg-white flex items-center">
          <span className="pl-[4px] pt-[2px] flex-1">1:1307031</span>
          <div className="w-[18px] h-full border-l border-[#d0d0d0] flex items-center justify-center"><Tri w={7} /></div>
        </div>
        <div className="w-[32px] flex justify-center"><Icon n="lock" s={18} /></div>
        <span className="w-[52px]">Magnifier</span>
        <Field cls="w-[85px] h-[21px] justify-between"><span>100%</span><Spin /></Field>
        <span className="ml-[7px] w-[51px]">Rotation</span>
        <Field cls="w-[84px] h-[21px] justify-between"><span>0.0 °</span><Spin /></Field>
        <div className="ml-[7px]"><Box on /></div>
        <span className="ml-[3px] w-[58px]">Render</span>
        <Globe16 />
        <span className="ml-[1px] w-[78px]">EPSG:26392</span>
        <Icon n="chat" s={16} />
      </div>
    </div>
  )
}

function Globe16() {
  return (
    <svg width="14" height="14" viewBox="0 0 24 24" className="shrink-0">
      <Globe c="#8a8a8a" />
    </svg>
  )
}
